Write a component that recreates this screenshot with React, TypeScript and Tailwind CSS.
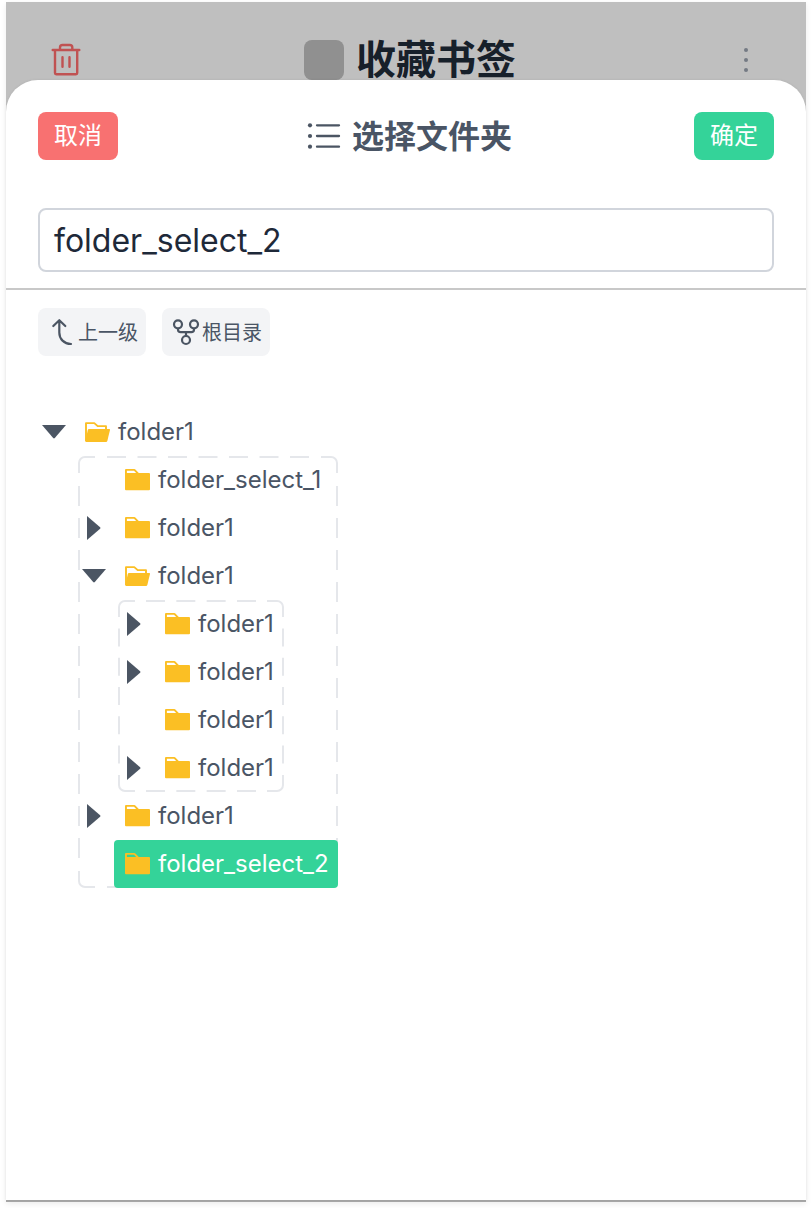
import type { ReactNode } from "react";

function TrashIcon() {
  return (
    <svg className="size-10" viewBox="0 0 40 40" fill="none" stroke="#c05252" strokeWidth="2.4" strokeLinecap="round" strokeLinejoin="round">
      <path d="M6.700 10H33.300M14 10V7.500A2.500 2.500 0 0 1 16.500 5H23.800A2.500 2.500 0 0 1 26.300 7.500V10M9 10V33A1.200 1.200 0 0 0 10.200 34.200H30A1.200 1.200 0 0 0 31.200 33V10M16.500 17.300V26.700M23.500 17.300V26.700" />
    </svg>
  );
}

function MoreIcon() {
  return (
    <svg className="size-10" viewBox="0 0 40 40" fill="#747a84">
      <circle cx="20" cy="10" r="2" />
      <circle cx="20" cy="20" r="2" />
      <circle cx="20" cy="30" r="2" />
    </svg>
  );
}

function ListIcon() {
  return (
    <svg className="size-10" viewBox="0 0 40 40" fill="#4b5563" stroke="#4b5563" strokeWidth="2.300" strokeLinecap="round">
      <g stroke="none">
        <circle cx="6" cy="9.300" r="2.100" />
        <circle cx="6" cy="20" r="2.100" />
        <circle cx="6" cy="30.700" r="2.100" />
      </g>
      <path d="M13 9.300H35M13 20H35M13 30.700H35" />
    </svg>
  );
}

function UpLevelIcon() {
  return (
    <svg className="size-8" viewBox="0 0 32 32" fill="none" stroke="#4b5563" strokeWidth="2.200" strokeLinecap="round" strokeLinejoin="round">
      <path d="M7.300 10L13.300 4.200L19.300 10M13.300 4.500V16.500C13.300 23 18 27.800 25 28" />
    </svg>
  );
}

function RootIcon() {
  return (
    <svg className="size-8" viewBox="0 0 32 32" fill="none" stroke="#4b5563" strokeWidth="2.200">
      <circle cx="8" cy="8.300" r="4" />
      <circle cx="24" cy="8.300" r="4" />
      <circle cx="16" cy="24" r="4" />
      <path d="M8 12.300V13.500A2.700 2.700 0 0 0 10.700 16.200H21.300A2.700 2.700 0 0 0 24 13.500V12.300M16 16.200V20" />
    </svg>
  );
}

function FolderIcon({ open }: { open?: boolean }) {
  return (
    <svg className="size-8 shrink-0" viewBox="0 0 32 32" fill="#fbbf24">
      {open ? (
        <>
          <path d="M5 25V7.100H13.300L16.700 10.100H25V13" fill="none" stroke="#fbbf24" strokeWidth="1.900" strokeLinejoin="round" />
          <path d="M8 13H28.300Q29.200 13 29 13.900L26.300 25.100Q26 26 25 26H5Q4.200 26 4.400 25L6.800 13.900Q7 13 8 13Z" />
        </>
      ) : (
        <path fillRule="evenodd" d="M5 5H13.400Q14 5 14.400 5.400L17.800 9H28Q29 9 29 10V25.300Q29 26.300 28 26.300H5Q4 26.300 4 25.300V6Q4 5 5 5ZM5.900 6.800V9H15.200L13 6.800Z" />
      )}
    </svg>
  );
}

type Arrow = "none" | "right" | "down";

function ArrowMark({ arrow }: { arrow: Arrow }) {
  return (
    <svg className="h-12 w-8 shrink-0" viewBox="0 0 32 48" fill="#4b5563">
      {arrow === "down" && <path d="M4 17H28L16.800 30.100Q16 30.900 15.200 30.100Z" />}
      {arrow === "right" && <path d="M9 12L22.100 23.200Q22.900 24 22.100 24.800L9 36Z" />}
    </svg>
  );
}

function TreeRow({ label, arrow = "none", selected }: { label: string; arrow?: Arrow; selected?: boolean }) {
  const tone = selected ? "bg-[#34d399] text-white" : "text-gray-600";
  return (
    <div className="flex h-12 items-center gap-1">
      <ArrowMark arrow={arrow} />
      <div className={`flex h-12 flex-1 items-center gap-[5px] rounded pl-[7px] ${tone}`}>
        <FolderIcon open={arrow === "down"} />
        <span className="whitespace-nowrap text-2xl">{label}</span>
      </div>
    </div>
  );
}

interface FrameProps {
  width: number;
  height: number;
  startX: number;
  dashX: string;
  startY: number;
  dashY: string;
  children: ReactNode;
}

function DashedGroup({ width: w, height: h, startX, dashX, startY, dashY, children }: FrameProps) {
  const c = 17;
  const r = 6;
  const corners = [
    `M1 ${c}V${1 + r}A${r} ${r} 0 0 1 ${1 + r} 1H${c}`,
    `M${w - c} 1H${w - 1 - r}A${r} ${r} 0 0 1 ${w - 1} ${1 + r}V${c}`,
    `M${w - 1} ${h - c}V${h - 1 - r}A${r} ${r} 0 0 1 ${w - 1 - r} ${h - 1}H${w - c}`,
    `M${c} ${h - 1}H${1 + r}A${r} ${r} 0 0 1 1 ${h - 1 - r}V${h - c}`,
  ].join("");
  return (
    <div className="relative ml-10" style={{ width: w, height: h }}>
      <svg className="absolute inset-0" width={w} height={h} fill="none" stroke="#e5e7eb" strokeWidth="2">
        <path d={corners} />
        <path d={`M${startX} 1H${w - startX}M${startX} ${h - 1}H${w - startX}`} strokeDasharray={dashX} />
        <path d={`M1 ${startY}V${h - startY}M${w - 1} ${startY}V${h - startY}`} strokeDasharray={dashY} />
      </svg>
      <div className="relative">{children}</div>
    </div>
  );
}

export default function App() {
  return (
    <div className="h-[1208px] w-[812px] overflow-hidden bg-white px-1.5 pt-0.5 font-['Inter','Noto_Sans_CJK_SC',sans-serif]">
      <div className="flex h-[1200px] w-[800px] flex-col border-b-2 border-[#a8a8a8] bg-[linear-gradient(#bfbfbf_0_140px,#fff_140px)] shadow-[0_2px_6px_rgba(0,0,0,0.08)]">
        <header className="flex h-[78px] shrink-0 items-end justify-between px-10">
          <TrashIcon />
          <div className="ml-2 flex h-10 items-center gap-3">
            <div className="size-10 rounded-lg bg-[#909090]" />
            <h1 className="text-[40px] leading-10 font-bold text-[#17202a]">收藏书签</h1>
          </div>
          <MoreIcon />
        </header>

        <main className="flex flex-1 flex-col rounded-t-[32px] bg-white shadow-[0_0_3px_rgba(0,0,0,0.08)]">
          <div className="flex items-center justify-between px-8 pt-8">
            <button className="h-12 w-20 rounded-lg bg-[#f87171] text-2xl text-white">取消</button>
            <div className="ml-1 flex items-center gap-2">
              <ListIcon />
              <h2 className="pt-0.5 text-[32px] leading-10 font-bold text-gray-600">选择文件夹</h2>
            </div>
            <button className="h-12 w-20 rounded-lg bg-[#34d399] text-2xl text-white">确定</button>
          </div>

          <div className="border-b-2 border-[#c8c8c8] px-8 pt-12 pb-4">
            <div className="flex h-16 items-center rounded-lg border-2 border-gray-300 px-3.5 pt-0.5 text-[32px] text-gray-800">
              folder_select_2
            </div>
          </div>

          <div className="flex gap-4 px-8 pt-[18px] text-xl text-gray-600">
            <button className="flex h-12 w-[108px] items-center rounded-lg bg-gray-100 pl-2">
              <UpLevelIcon />
              <span className="pt-0.5">上一级</span>
            </button>
            <button className="flex h-12 w-[108px] items-center rounded-lg bg-gray-100 pl-2">
              <RootIcon />
              <span className="pt-0.5">根目录</span>
            </button>
          </div>

          <div className="px-8 pt-[52px]">
            <TreeRow label="folder1" arrow="down" />
            <DashedGroup width={260} height={432} startX={29} dashX="19 11.500" startY={30} dashY="20 12">
              <TreeRow label="folder_select_1" />
              <TreeRow label="folder1" arrow="right" />
              <TreeRow label="folder1" arrow="down" />
              <DashedGroup width={166} height={192} startX={28} dashX="19 11.330" startY={28.4} dashY="18 11.300">
                <TreeRow label="folder1" arrow="right" />
                <TreeRow label="folder1" arrow="right" />
                <TreeRow label="folder1" />
                <TreeRow label="folder1" arrow="right" />
              </DashedGroup>
              <TreeRow label="folder1" arrow="right" />
              <TreeRow label="folder_select_2" selected />
            </DashedGroup>
          </div>
        </main>
      </div>
    </div>
  );
}
